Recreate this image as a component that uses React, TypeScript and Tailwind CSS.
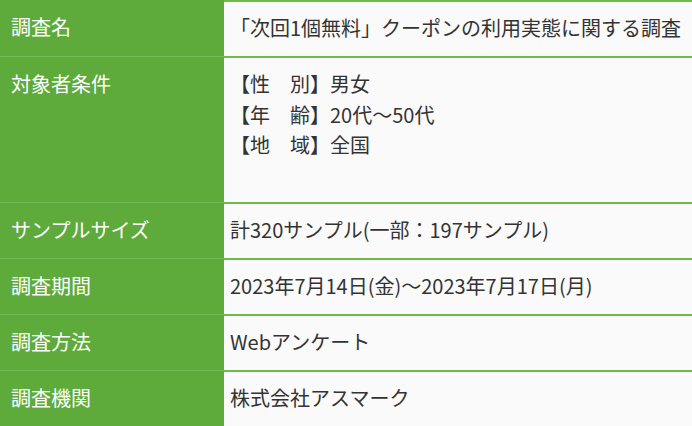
import React from "react";

const rows: { label: string; lines: string[]; h: string }[] = [
  { label: "調査名", lines: ["「次回1個無料」クーポンの利用実態に関する調査"], h: "h-[56px]" },
  { label: "対象者条件", lines: ["【性　別】男女", "【年　齢】20代〜50代", "【地　域】全国"], h: "h-[146px]" },
  { label: "サンプルサイズ", lines: ["計320サンプル(一部：197サンプル)"], h: "h-[56px]" },
  { label: "調査期間", lines: ["2023年7月14日(金)〜2023年7月17日(月)"], h: "h-[56px]" },
  { label: "調査方法", lines: ["Webアンケート"], h: "h-[56px]" },
  { label: "調査機関", lines: ["株式会社アスマーク"], h: "h-[56px]" },
];

export default function App() {
  return (
    <div
      className="w-[692px] h-[426px] overflow-hidden bg-[#fafafa] text-[20px] leading-[30.5px]"
      style={{ fontFamily: '"Noto Sans CJK JP", "Noto Sans", sans-serif' }}
    >
      <div className="flex flex-col">
        {rows.map((r, i) => (
          <div key={i} className={`flex ${r.h}`}>
            <div
              className={`w-[224px] shrink-0 bg-[#5eab3c] text-white pl-[11px] pt-[12px] ${
                i === 0 ? "" : "border-t border-[#72bb55]"
              }`}
            >
              {r.label}
            </div>
            <div className="flex-1 border-t-2 border-[#6cbd44] text-[#333333] pl-[6px] pt-[11px]">
              {r.lines.map((l, j) => (
                <div key={j}>{l}</div>
              ))}
            </div>
          </div>
        ))}
      </div>
    </div>
  );
}
